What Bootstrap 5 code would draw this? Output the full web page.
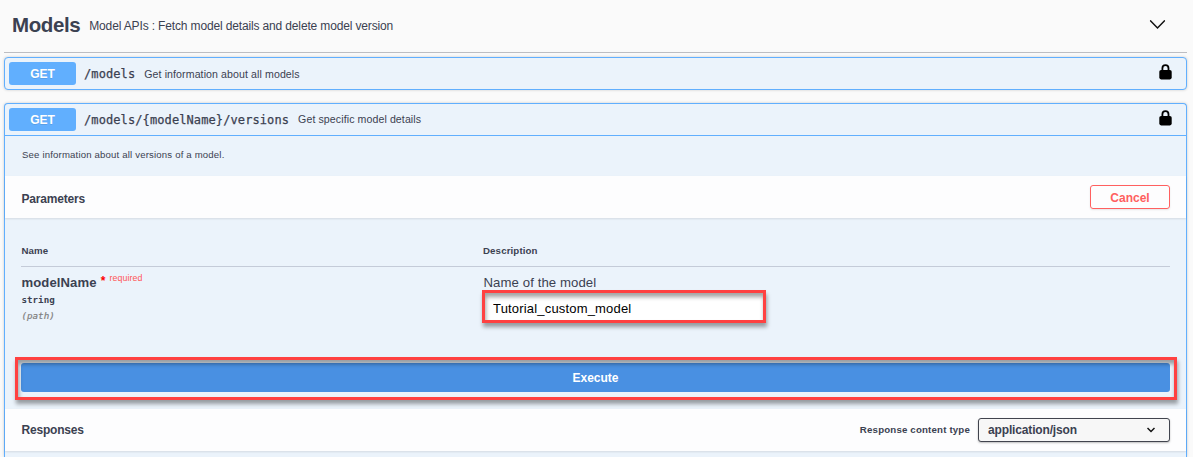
<!DOCTYPE html>
<html lang="en">
<head>
<meta charset="utf-8">
<meta name="viewport" content="width=device-width, initial-scale=1">
<title>Models API</title>
<link href="https://cdn.jsdelivr.net/npm/bootstrap@5.3.0/dist/css/bootstrap.min.css" rel="stylesheet">
<script src="https://cdn.jsdelivr.net/npm/bootstrap@5.3.0/dist/js/bootstrap.bundle.min.js"></script>
<style>
body{font-family:"Liberation Sans",Arial,sans-serif;color:#3b4151;background:#fafafa;font-size:12px;line-height:1.2}
.api{width:1189px;height:457px;padding-right:6px;margin-left:4px;overflow:clip;overflow-clip-margin:4px}
.tag-head{height:53px;border-bottom:1px solid #bcbdc2;padding:0 21px 0 8px}
.tag-head h1{font-size:20.5px;font-weight:700;line-height:24px;margin:0 9px 2px 0;letter-spacing:-.4px}
.tag-head p{font-size:12px;margin:0;letter-spacing:-.145px}
.op{border:1px solid #61affe;border-radius:4px;background:#ebf3fb;box-shadow:0 0 3px rgba(0,0,0,.19)}
.op-line{height:31px;padding:0 14px 0 4px}
.verb{width:67px;height:23px;border-radius:3px;background:#61affe;color:#fff;font-weight:700;font-size:12px;text-shadow:0 1px 0 rgba(0,0,0,.1);margin-right:8px;padding-top:1px}
.path{font-family:"DejaVu Sans Mono",monospace;font-size:12px;margin-right:9px;padding-top:1px;letter-spacing:.1px;-webkit-text-stroke:.25px #3b4151}
.note{font-size:10.6px;letter-spacing:.09px;padding-top:1px}
.lock{margin-bottom:3px}
.op-open{height:354px;margin-top:13px;border-bottom:0;border-radius:4px 4px 0 0}
.op-open .op-line{height:32px;border-bottom:1px solid #61affe}
.op-open .note{padding-top:0}
.intro{height:40px;padding:0 17px 2px;font-size:9.6px;letter-spacing:.17px}
.bar{height:42px;background:#fdfdfe;box-shadow:0 1px 2px rgba(0,0,0,.1);padding:0 16px 0 16.5px;position:relative}
.bar h2{font-size:12px;font-weight:700;margin:0;letter-spacing:-.2px}
.cancel{width:80px;height:24px;border:1px solid #ff6060;border-radius:3px;color:#ff6060;background:transparent;font-size:12px;font-weight:700;box-shadow:0 1px 2px rgba(0,0,0,.1);padding:2px 0 0}
.params{height:191px;padding:0 16px}
.params-head{height:49px;border-bottom:1px solid #c4cbd8;font-size:9.7px;font-weight:700;padding-top:27px;letter-spacing:.12px}
.params-row{height:96px;padding-top:8px}
.col-name{width:462px;padding-left:.5px}
.pname{height:17px;font-size:13.1px;font-weight:700;line-height:16px;letter-spacing:.1px}
.star{color:#f00;font-size:12px;margin-left:4px;line-height:13px}
.req{color:#f55;font-size:8.8px;font-weight:400;line-height:6px;margin-left:4px}
.kind{font-family:"DejaVu Sans Mono",monospace;font-size:9.2px;line-height:16px}
.place{color:#808080;-webkit-text-stroke:.2px #808080}
.pdesc{font-size:13.2px;line-height:15px;letter-spacing:.08px;padding-left:.5px}
.marked{border:3px solid #ff4141;box-shadow:1px 4px 4px rgba(0,0,0,.36),inset 1px 4px 4px rgba(0,0,0,.36)}
.field{width:284px;height:33px;margin-left:-1px;background:#fff;color:#000;font-size:13px;letter-spacing:.18px;padding:4px 8px 0;border-radius:0;outline:0;font-family:inherit}
.exec-wrap{position:relative}
.exec{width:1149px;height:29px;background:#4990e2;border:0;border-radius:3px;color:#fff;font-size:12px;font-weight:700;padding:2px 0 0}
.exec-frame{position:absolute;inset:-6px -7px -8px -6px;pointer-events:none;z-index:2}
.ctype{font-size:9.7px;font-weight:700;margin-right:8px;letter-spacing:.17px}
.picker{width:192px;height:24px;border:1px solid #41444e;border-radius:3px;background:#f7f7f7;box-shadow:0 1px 2px rgba(0,0,0,.25);font-size:12px;letter-spacing:-.15px;font-weight:700;padding:0 14px 0 9px}
</style>
</head>
<body>
<main class="api text-nowrap">
  <header class="tag-head d-flex align-items-center">
    <h1>Models</h1><p>Model APIs : Fetch model details and delete model version</p>
    <svg class="ms-auto" width="18" height="12" viewBox="0 0 18 12" fill="none" stroke="#111" stroke-width="1.5" stroke-linecap="round"><path d="M2.7 .9 9.5 7.9 16.3 .9"/></svg>
  </header>
  <section class="op mt-1">
    <div class="op-line d-flex align-items-center">
      <span class="verb d-flex align-items-center justify-content-center">GET</span><span class="path">/models</span><span class="note">Get information about all models</span>
      <svg class="ms-auto lock" width="13" height="16" viewBox="0 0 13 16"><rect x=".3" y="6" width="12.4" height="9.4" rx="1.8"/><path d="M3.4 7V4.3a3.05 3.1 0 0 1 6.1 0V7" fill="none" stroke="#000" stroke-width="1.8"/></svg>
    </div>
  </section>
  <section class="op op-open">
    <div class="op-line d-flex align-items-center">
      <span class="verb d-flex align-items-center justify-content-center">GET</span><span class="path">/models/{modelName}/versions</span><span class="note">Get specific model details</span>
      <svg class="ms-auto lock" width="13" height="16" viewBox="0 0 13 16"><rect x=".3" y="6" width="12.4" height="9.4" rx="1.8"/><path d="M3.4 7V4.3a3.05 3.1 0 0 1 6.1 0V7" fill="none" stroke="#000" stroke-width="1.8"/></svg>
    </div>
    <div class="intro d-flex align-items-center">See information about all versions of a model.</div>
    <div class="bar d-flex align-items-center justify-content-between"><h2 class="pt-1">Parameters</h2><button class="cancel">Cancel</button></div>
    <div class="params">
      <div class="params-head d-flex"><div class="col-name">Name</div><div>Description</div></div>
      <div class="params-row d-flex">
        <div class="col-name">
          <div class="pname d-flex align-items-start">modelName<span class="star">*</span><span class="req">required</span></div>
          <div class="kind fw-bold">string</div>
          <div class="kind place fst-italic">(path)</div>
        </div>
        <div><div class="pdesc">Name of the model</div><input class="field marked d-block" type="text" value="Tutorial_custom_model" aria-label="modelName"></div>
      </div>
      <div class="exec-wrap"><button class="exec d-block">Execute</button><div class="exec-frame marked"></div></div>
    </div>
    <div class="bar d-flex align-items-center"><h2>Responses</h2><span class="ctype ms-auto">Response content type</span>
      <div class="picker d-flex align-items-center justify-content-between"><span>application/json</span><svg width="8" height="6" viewBox="0 0 8 6" fill="none" stroke="#111" stroke-width="1.5"><path d="M.5 1 4 4.5 7.5 1"/></svg></div>
    </div>
  </section>
</main>
</body>
</html>
